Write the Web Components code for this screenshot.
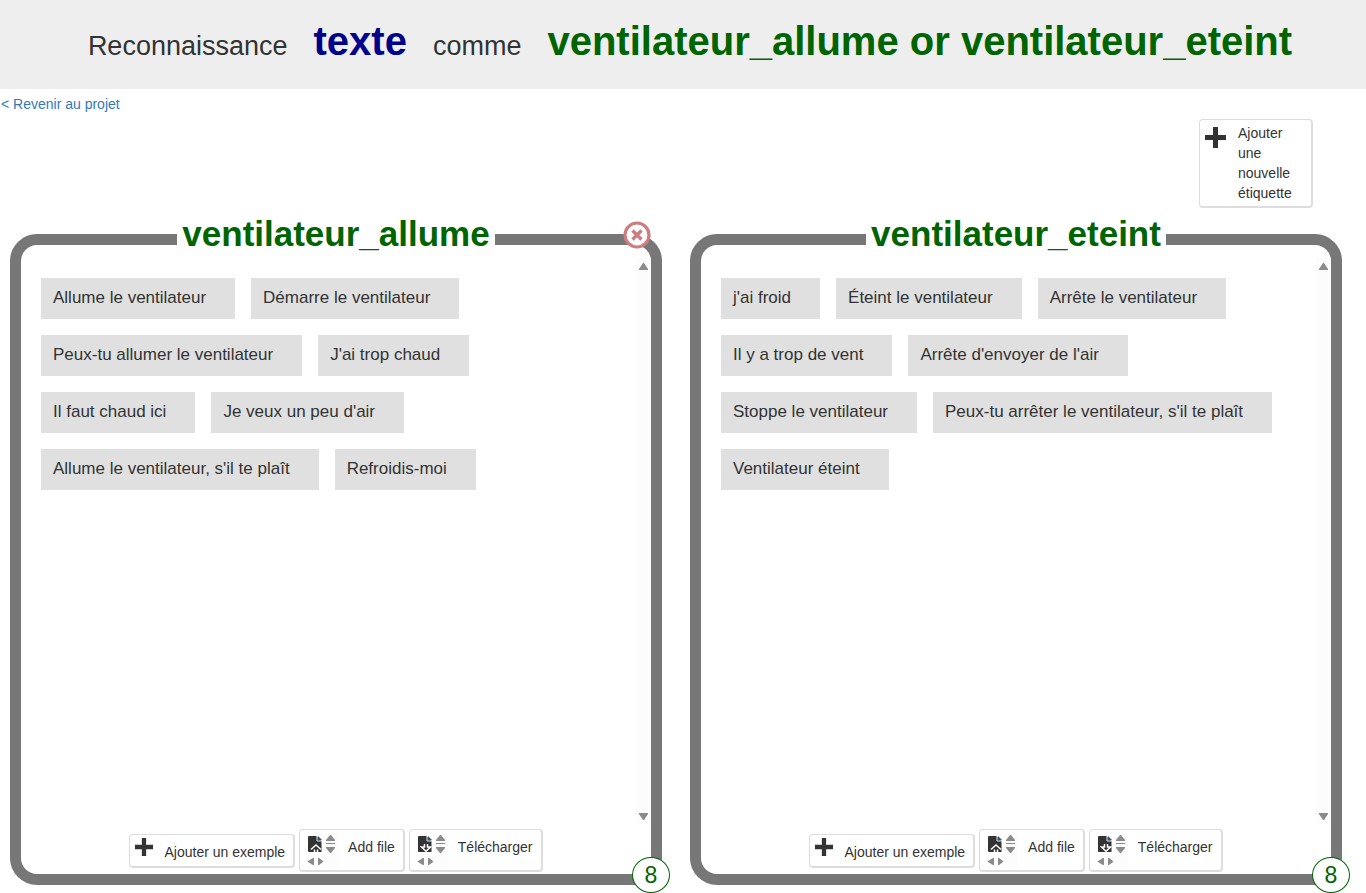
<!DOCTYPE html>
<html lang="fr">
<head>
<meta charset="utf-8">
<title>Reconnaissance texte</title>
<style>
html, body { margin: 0; }
body { font-family: "Liberation Sans", Arial, sans-serif; font-size: 14px; line-height: 20px; color: #333; background: #fff; }
</style>
</head>
<body>
<training-page>
  <page-banner slot="banner" kind="texte" labels="ventilateur_allume or ventilateur_eteint"></page-banner>
  <label-panel name="ventilateur_allume" count="8" removable>
    <phrase-chip>Allume le ventilateur</phrase-chip>
    <phrase-chip>Démarre le ventilateur</phrase-chip>
    <phrase-chip>Peux-tu allumer le ventilateur</phrase-chip>
    <phrase-chip>J'ai trop chaud</phrase-chip>
    <phrase-chip>Il faut chaud ici</phrase-chip>
    <phrase-chip>Je veux un peu d'air</phrase-chip>
    <phrase-chip>Allume le ventilateur, s'il te plaît</phrase-chip>
    <phrase-chip>Refroidis-moi</phrase-chip>
  </label-panel>
  <label-panel name="ventilateur_eteint" count="8">
    <phrase-chip>j'ai froid</phrase-chip>
    <phrase-chip>Éteint le ventilateur</phrase-chip>
    <phrase-chip>Arrête le ventilateur</phrase-chip>
    <phrase-chip>Il y a trop de vent</phrase-chip>
    <phrase-chip>Arrête d'envoyer de l'air</phrase-chip>
    <phrase-chip>Stoppe le ventilateur</phrase-chip>
    <phrase-chip>Peux-tu arrêter le ventilateur, s'il te plaît</phrase-chip>
    <phrase-chip>Ventilateur éteint</phrase-chip>
  </label-panel>
</training-page>
<script>
class Base extends HTMLElement {
  connectedCallback() {
    if (this.shadowRoot) return;
    this.attachShadow({ mode: 'open' }).innerHTML = this.view();
  }
}

customElements.define('page-banner', class extends Base {
  view() {
    return `<style>
      :host { display: block; background: #eee; }
      h1 { margin: 0; padding: 17px 10px 19px 24px; display: flex; flex-wrap: wrap; justify-content: center; align-items: baseline; column-gap: 26px; font-size: 27px; line-height: 48px; font-weight: 400; }
      strong { font-size: 40px; }
      .kind { color: #00008b; }
      .labels { color: #006400; }
    </style>
    <h1><span>Reconnaissance</span><strong class="kind">${this.getAttribute('kind')}</strong><span>comme</span><strong class="labels">${this.getAttribute('labels')}</strong></h1>`;
  }
});

customElements.define('plus-icon', class extends Base {
  view() {
    return `<style>:host { display: block; width: 20px; height: 20px; } svg { display: block; width: 100%; height: 100%; }</style>
    <svg viewBox="0 0 21 21" fill="#333" aria-hidden="true"><path d="M8 0h5v8h8v5h-8v8H8v-8H0V8h8z"/></svg>`;
  }
});

customElements.define('file-icon', class extends Base {
  view() {
    const arrow = this.getAttribute('direction') === 'up'
      ? 'M3 15.500L8 11l5 4.500M6.500 18v-2.500M9.500 18v-2.500' : 'M6.500 10v3H3.500L8 17.200l4.500-4.200H9.500v-3';
    return `<style>:host { display: block; } svg { display: block; }</style>
    <svg width="30" height="34" viewBox="0 0 30 34" aria-hidden="true">
      <path fill="#fcfcfc" d="M17 0h13v34H17zM0 22h17v12H0z"/>
      <svg x="0" y="0" width="14" height="18">
        <path fill="#333" d="M0 3q0-1 1-1h7.500l5 5v11H1q-1 0-1-1z"/>
        <path fill="none" stroke="#dfe7f5" stroke-width="1" d="M9 2v5h5"/><path fill="#3b4f74" d="M10 2l4 4h-4z"/>
        <path fill="none" stroke="#fff" stroke-width="1.500" d="${arrow}"/>
      </svg>
      <g fill="#8b8b8b"><path d="M22 1h1l4 5v1h-9V6zM18 9h9v1h-9zM18 13h9v1l-4 5h-1l-4-5zM6 24v7H5l-5-3v-1l5-3zM10 24v7h1l4-3v-1l-4-3z"/></g>
    </svg>`;
  }
});

customElements.define('action-button', class extends Base {
  view() {
    return `<style>
      :host { display: block; }
      button { display: flex; align-items: flex-start; margin: 0; font: inherit; color: inherit; text-align: left; background: #fff; border: solid #ddd; border-width: 1px 2px 2px 1px; border-radius: 4px; cursor: pointer; }
      :host([kind="label"]) button { gap: 12px; width: 114px; padding: 3px 10px 3px 5px; }
      :host([kind="label"]) plus-icon { width: 21px; height: 21px; margin-top: 4px; flex: none; }
      :host([kind="example"]) button { gap: 11px; padding: 3px 8px 4px 5px; }
      :host([kind="example"]) plus-icon { width: 18px; height: 18px; }
      :host([kind="example"]) span { padding-top: 4px; }
      :host([kind="file"]) button { gap: 10px; padding: 4px 8px 2px 8px; }
      :host([kind="file"]) span { padding-top: 3px; }
      ::slotted(*) { flex: none; }
    </style>
    <button type="button"><slot name="icon"></slot>${this.getAttribute('kind') === 'file' ? '' : '<plus-icon></plus-icon>'}<span><slot></slot></span></button>`;
  }
});

customElements.define('phrase-chip', class extends Base {
  view() {
    return `<style>:host { display: block; box-sizing: border-box; padding: 10px 29px 11px 12px; background: #e0e0e0; font-size: 17px; line-height: 20px; }</style><slot></slot>`;
  }
});

customElements.define('label-panel', class extends Base {
  view() {
    const close = this.hasAttribute('removable') ? `<button class="close" type="button" aria-label="Supprimer">
      <svg width="28" height="28" viewBox="0 0 28 28"><circle cx="14" cy="14" r="12" fill="#fff" stroke="#cd7d80" stroke-width="3.2"/><path d="M9.500 9.500l9 9M18.500 9.500l-9 9" stroke="#cd7d80" stroke-width="3.4"/></svg></button>` : '';
    return `<style>
      :host { position: relative; display: flex; flex-direction: column; min-width: 0; box-sizing: border-box; border: 11px solid #777; border-radius: 27px; background: #fff; }
      h2 { margin: -31px auto 0; padding: 0 5px; background: #fff; color: #006400; font-size: 35px; line-height: 40px; }
      .body { flex: 1; display: flex; margin-top: 4px; }
      .chips { flex: 1; display: flex; flex-wrap: wrap; align-content: flex-start; gap: 16px; padding: 20px; }
      .bar { width: 15px; display: flex; flex-direction: column; justify-content: space-between; align-items: center; padding: 5px 0 4px; box-sizing: border-box; background: #fcfcfc; }
      .actions { display: flex; flex-wrap: wrap; justify-content: center; align-items: center; gap: 4px; padding: 5px 0 2px; }
      .close { position: absolute; top: -24px; right: 0; padding: 0; border: 0; background: none; cursor: pointer; }
      .close svg { display: block; }
      .count { position: absolute; right: -19px; bottom: -19px; box-sizing: border-box; width: 38px; height: 36px; border: 1px solid #006400; border-radius: 50%; background: #fff; color: #006400; font-size: 23px; line-height: 34px; text-align: center; }
    </style>
    <h2>${this.getAttribute('name')}</h2>
    <div class="body">
      <div class="chips"><slot></slot></div>
      <div class="bar" aria-hidden="true">
        <svg width="9" height="7" fill="#8b8b8b"><path d="M4 0h1l4 6v1H0V6z"/></svg>
        <svg width="9" height="7" fill="#8b8b8b"><path d="M0 0h9v1L5 7H4L0 1z"/></svg>
      </div>
    </div>
    <div class="actions">
      <action-button kind="example">Ajouter un exemple</action-button>
      <action-button kind="file"><file-icon slot="icon" direction="up"></file-icon>Add file</action-button>
      <action-button kind="file"><file-icon slot="icon" direction="down"></file-icon>Télécharger</action-button>
    </div>
    ${close}<div class="count">${this.getAttribute('count')}</div>`;
  }
});

customElements.define('training-page', class extends Base {
  view() {
    return `<style>
      :host { display: flex; flex-direction: column; min-height: 100vh; box-sizing: border-box; padding-bottom: 8px; }
      nav { padding: 5px 1px; }
      a { color: #337ab7; text-decoration: none; }
      .tools { display: flex; justify-content: flex-end; padding-right: 53px; margin-bottom: 26px; }
      main { flex: 1; display: grid; grid-template-columns: repeat(2, minmax(0, 1fr)); column-gap: 28px; padding: 0 24px 0 10px; }
    </style>
    <slot name="banner"></slot>
    <nav><a href="#projet">&lt; Revenir au projet</a></nav>
    <div class="tools"><action-button kind="label">Ajouter une nouvelle étiquette</action-button></div>
    <main><slot></slot></main>`;
  }
});
</script>
</body>
</html>
